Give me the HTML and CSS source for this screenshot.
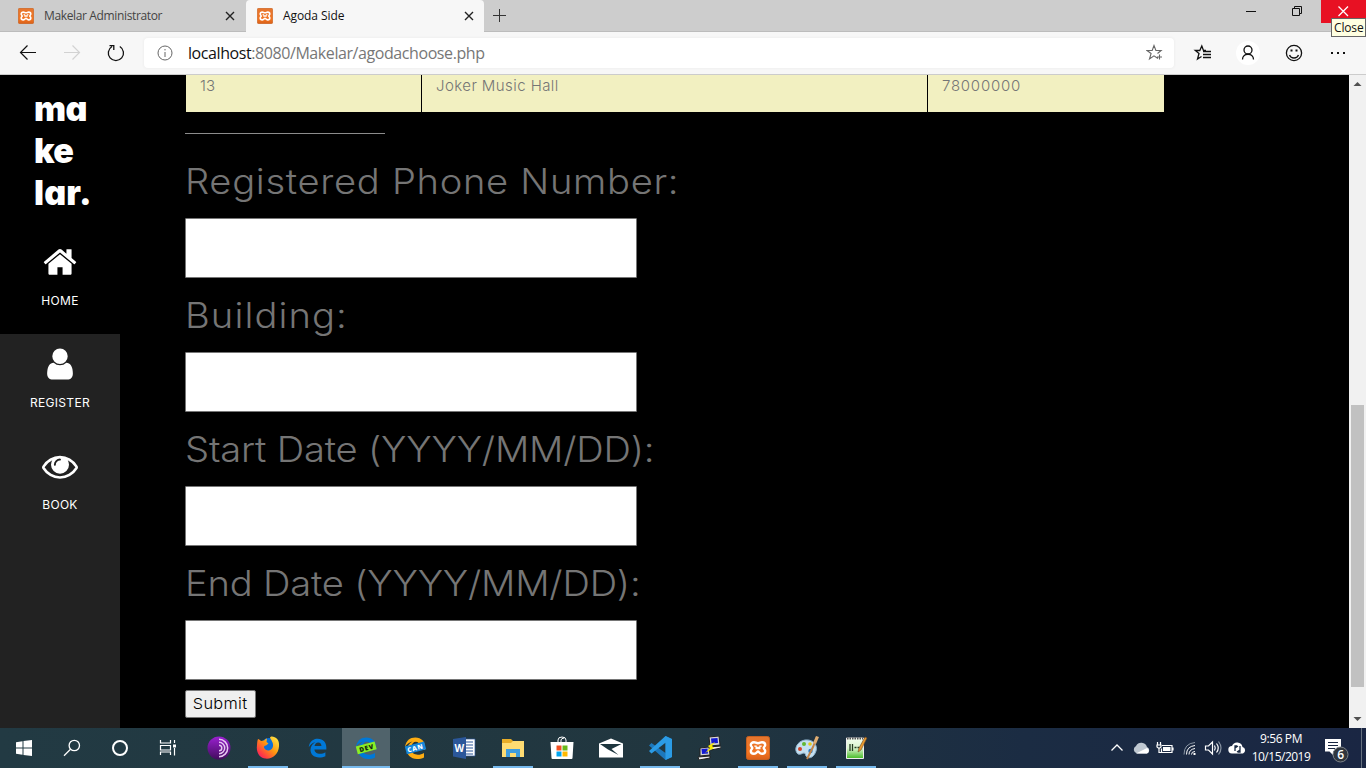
FILE: index.html
```html
<!DOCTYPE html>
<html lang="en">
<head>
<meta charset="utf-8">
<title>Agoda Side</title>
<link rel="stylesheet" href="styles.css">
</head>
<body>
<svg class="defs" width="0" height="0">
  <defs>
    <linearGradient id="orange" x1="0" y1="0" x2="0" y2="1"><stop offset="0" stop-color="#e5762f"/><stop offset=".7" stop-color="#f37521"/><stop offset="1" stop-color="#d9601a"/></linearGradient>
    <linearGradient id="tor" x1="0" y1="0" x2="0" y2="1"><stop offset="0" stop-color="#9a20d0"/><stop offset="1" stop-color="#420c5d"/></linearGradient>
    <linearGradient id="fox" x1="1" y1="0" x2="0" y2="1"><stop offset="0" stop-color="#fff44f"/><stop offset=".45" stop-color="#ff980e"/><stop offset=".8" stop-color="#ff3647"/><stop offset="1" stop-color="#e31587"/></linearGradient>
    <linearGradient id="grass" x1="0" y1="0" x2="0" y2="1"><stop offset="0" stop-color="#f4fdf0"/><stop offset=".5" stop-color="#d8f4cc"/><stop offset="1" stop-color="#45bb25"/></linearGradient>
    <symbol id="xampp" viewBox="0 0 24 24">
      <rect x=".5" y=".5" width="23" height="23" rx="2" fill="url(#orange)" stroke="#c8601f"/>
      <path d="M8 6.200c1.500 0 2.200 1 4 1s2.500-1 4-1c2 0 3.200 1.200 3.200 2.900 0 1.400-1.500 1.900-1.500 2.900s1.500 1.500 1.500 2.900c0 1.700-1.200 2.900-3.200 2.900-2.500 0-3-2.400-4-2.400s-1.500 2.400-4 2.400c-2 0-3.200-1.200-3.200-2.900 0-1.400 1.500-1.900 1.500-2.900s-1.500-1.500-1.500-2.900c0-1.700 1.200-2.900 3.200-2.900zM9.500 9.500v1.200M14.500 9.500v1.200M9.500 12h5" fill="none" stroke="#fff" stroke-width="2.400"/>
    </symbol>
    <symbol id="edge" viewBox="0 0 24 24">
      <path d="M2 11C3 4.500 7 1.500 12.300 1.500c6.200 0 9.800 4.300 9.800 10v2.300H8.500c.2 3.300 3 4.900 6.300 4.900 2.300 0 4.500-.7 6.200-1.800v4.500c-1.900 1-4.300 1.500-7 1.500C7.600 22.900 4 19.200 4 14.100c0-4 2.300-7 5.600-8.700C6.200 5.900 3.700 8.100 2 11zm6.600-1.200h7.900c0-2.200-1.200-4.100-3.700-4.100-2.200 0-3.800 1.700-4.200 4.100z" fill="currentColor"/>
    </symbol>
  </defs>
</svg>

<header class="browser">
  <div class="tabs">
    <div class="tab">
      <svg class="favicon"><use href="#xampp"/></svg>
      <span class="tab-title admin">Makelar Administrator</span>
      <svg class="tab-close" viewBox="0 0 10 10"><path d="M1 1l8 8M9 1l-8 8"/></svg>
    </div>
    <div class="tab active">
      <svg class="favicon"><use href="#xampp"/></svg>
      <span class="tab-title agoda">Agoda Side</span>
      <svg class="tab-close" viewBox="0 0 10 10"><path d="M1 1l8 8M9 1l-8 8"/></svg>
    </div>
    <svg class="new-tab" viewBox="0 0 13 13"><path d="M6.500 0v13M0 6.500h13"/></svg>
    <div class="window-buttons">
      <svg viewBox="0 0 46 23"><path d="M17 11.500h10"/></svg>
      <svg viewBox="0 0 46 23"><path d="M17.500 8.500h7v7h-7zM19.500 8V6.500h7v7H25"/></svg>
      <svg class="close" viewBox="0 0 45 23"><path d="M17.500 6.500l9.500 9.500M27 6.500l-9.500 9.500"/></svg>
    </div>
  </div>
  <div class="toolbar">
    <svg class="nav" viewBox="0 0 120 42" fill="none">
      <path d="M36 20.500H21M27.500 13.500l-7 7 7 7" stroke="#111" stroke-width="1.200"/>
      <path d="M64 20.500h15M72.500 13.500l7 7-7 7" stroke="#d2d2d2" stroke-width="1.200"/>
      <path d="M119.800 14.500a7.600 7.600 0 1 1-7.800 0M109.500 13.700h4.300v4.300" stroke="#111" stroke-width="1.300"/>
    </svg>
    <div class="address">
      <svg class="info" viewBox="0 0 16 16"><circle cx="8" cy="8" r="7"/><path d="M8 7v5M8 4v1.400"/></svg>
      <span class="url"><b>localhost</b>:8080/Makelar/agodachoose.php</span>
      <svg class="star" viewBox="0 0 18 18"><path d="M12 14.500l-4-2.700-4.500 3.200 1.600-5.500L1 6.500h5.200L8 1.500l1.900 5h5.200l-3.600 3M13.500 10.500v5M11 13h5"/></svg>
    </div>
    <svg class="tool-icons" viewBox="0 0 180 42" fill="none" stroke="#111" stroke-width="1.300">
      <path d="M30 18.500h-2.500L25.800 14l-2 4.500h-4.500l3.700 3-1.500 5.500 4-2.500M27 19.500h8M27 22.500h8M27 25.500h8"/>
      <circle cx="72" cy="21" r="12" fill="#fff" stroke="none"/>
      <circle cx="72" cy="18" r="4"/><path d="M66.500 27.500c0-7 11-7 11 0"/>
      <circle cx="118" cy="21" r="7.600"/><path d="M113.500 23c1.500 4 7.500 4 9 0"/>
      <path d="M114.500 18.500h2M119.500 18.500h2M155 21h2M161 21h2M167 21h2" stroke-width="2"/>
    </svg>
  </div>
  <span class="tooltip">Close</span>
</header>

<div class="page">
  <nav class="sidebar">
    <div class="brand">ma<br>ke<br><span class="last">lar.</span></div>
    <a class="item home"><svg viewBox="0 0 1792 1792"><path d="M1472 992v480q0 26-19 45t-45 19h-384v-384h-256v384h-384q-26 0-45-19t-19-45v-480q0-1 .5-3t.5-3l575-474 575 474q1 2 1 6zm223-69l-62 74q-8 9-21 11h-3q-13 0-21-7l-692-577-692 577q-12 8-24 7-13-2-21-11l-62-74q-8-10-7-23.500t11-21.500l719-599q32-26 76-26t76 26l244 204v-195q0-14 9-23t23-9h192q14 0 23 9t9 23v408l219 182q10 8 11 21.500t-7 23.500z"/></svg><span>HOME</span></a>
    <a class="item"><svg viewBox="0 0 1792 1792"><path d="M1536 1399q0 109-62.500 187t-150.500 78h-854q-88 0-150.500-78t-62.500-187q0-85 8.500-160.500t31.500-152 58.500-131 94-89 134.500-34.500q131 128 313 128t313-128q76 0 134.500 34.500t94 89 58.500 131 31.500 152 8.500 160.500zm-256-887q0 159-112.500 271.500t-271.500 112.500-271.500-112.500-112.500-271.500 112.500-271.500 271.500-112.500 271.500 112.500 112.500 271.500z"/></svg><span>REGISTER</span></a>
    <a class="item"><svg viewBox="0 0 1792 1792"><path d="M1664 960q-152-236-381-353 61 104 61 225 0 185-131.500 316.500t-316.500 131.500-316.500-131.500-131.500-316.500q0-121 61-225-229 117-381 353 133 205 333.500 326.500t434.500 121.500 434.500-121.500 333.500-326.500zm-720-384q0-20-14-34t-34-14q-125 0-214.500 89.500t-89.500 214.500q0 20 14 34t34 14 34-14 14-34q0-86 61-147t147-61q20 0 34-14t14-34zm848 384q0 34-20 69-140 230-376.500 368.500t-499.500 138.500-499.500-139-376.500-368q-20-35-20-69t20-69q140-229 376.500-368t499.500-139 499.500 139 376.500 368q20 35 20 69z"/></svg><span>BOOK</span></a>
  </nav>
  <main class="content">
    <div class="row"><div>13</div><div class="name">Joker Music Hall</div><div class="price">78000000</div></div>
    <hr class="rule">
    <form class="form">
      <label class="wide">Registered Phone Number:</label><input type="text">
      <label class="wide building">Building:</label><input type="text">
      <label class="dated">Start Date (YYYY/MM/DD):</label><input type="text">
      <label class="dated">End Date (YYYY/MM/DD):</label><input type="text">
      <button type="button" class="submit"><span>Submit</span></button>
    </form>
  </main>
  <div class="scrollbar">
    <svg viewBox="0 0 17 17"><path d="M4.500 11h8l-4-4z"/></svg>
    <div class="thumb"></div>
    <svg viewBox="0 0 17 17"><path d="M4.500 6h8l-4 4z"/></svg>
  </div>
</div>

<footer class="taskbar">
  <div class="system">
    <svg viewBox="0 0 24 24"><path fill="#fff" d="M4 6.300l6.500-1v6.300H4zM11.500 5.100L20 4v7.600h-8.500zM4 12.500h6.500v6.300l-6.500-1zM11.500 12.500H20V20l-8.500-1.100z"/></svg>
    <svg viewBox="0 0 24 24" fill="none" stroke="#fff" stroke-width="1.300"><circle cx="14.300" cy="9.500" r="5.200"/><path d="M10.500 13.300L4 19.800"/></svg>
    <svg viewBox="0 0 24 24" fill="none" stroke="#fff" stroke-width="2"><circle cx="12" cy="12" r="7"/></svg>
    <svg viewBox="0 0 24 24" fill="none" stroke="#fff" stroke-width="1.200"><path d="M4.500 4v3h10V4M4.500 19v-3h10v3M4.500 9.500h10v4.500h-10zM18.500 4v3M18.500 12v7.500"/><path d="M17 8.500h3v3h-3z" fill="#fff" stroke="none"/></svg>
  </div>
  <div class="apps">
    <div><svg viewBox="0 0 24 24"><circle cx="12" cy="12" r="11.500" fill="url(#tor)"/><g fill="none" stroke="#e7c8f2" stroke-width="1.500"><path d="M12 3.300a8.700 8.700 0 0 1 0 17.400M12 6.300a5.700 5.700 0 0 1 0 11.400M12 9.200a2.800 2.800 0 0 1 0 5.600"/></g></svg></div>
    <div class="open"><svg viewBox="0 0 24 24"><circle cx="13" cy="10.500" r="8.500" fill="#0a6fd8"/><path fill="url(#fox)" d="M2 3c1 0 2 1 3 2l3-.5c2-2 3-2 3-2l-.5 3.500 2 1.500-2.500 2c-2 0-2 1-2 2 1 3 5 4 7 2 2-1 3-5 1-8-.5-2-2-3-2-4 1-1.500 2-1 2-1 6 1 7.500 5 7 10-.500 8-7 13-14 12C3 21.500 0 16 1 9c.2-3 .5-5 1-6z"/></svg></div>
    <div class="blue"><svg class="small" viewBox="0 0 24 24"><use href="#edge"/></svg></div>
    <div class="open current blue"><svg viewBox="0 0 24 24"><use href="#edge"/><g transform="rotate(-15 12 12)"><rect x="2.500" y="8" width="19.500" height="8" fill="#8aee25"/><text x="5" y="14.500" class="ribbon" fill="#122312">DEV</text></g></svg></div>
    <div class="gold"><svg viewBox="0 0 24 24"><use href="#edge"/><g transform="rotate(-15 12 12)"><rect x="2.500" y="8" width="20" height="8" fill="#1687dc"/><text x="4" y="14.500" class="ribbon" fill="#fff">CAN</text></g></svg></div>
    <div><svg viewBox="0 0 24 24"><path d="M12 3h11v17H12z" fill="#fff" stroke="#2b579a" stroke-width=".7"/><path d="M14 6h7M14 9h7M14 12h7M14 15h7M14 18h7" stroke="#2b579a" stroke-width="1.200"/><path d="M1 3l13-2v22L1 20.500z" fill="#2b579a"/><text x="2.500" y="16" class="word" fill="#fff">W</text></svg></div>
    <div class="open"><svg viewBox="0 0 24 24"><path d="M1 3h9l2 2h10v16H1z" fill="#e8ad28"/><path d="M1 7h9l2-2h11v16H1z" fill="#ffdc72"/><path d="M5 13h14v8h-4v-4H9v4H5z" fill="#409dde"/></svg></div>
    <div><svg viewBox="0 0 24 24"><path d="M8 6V4q0-3 4-3t4 3v2M11 6V4q0-1.500 3-2" fill="none" stroke="#fff"/><path d="M.5 6h23l-1 16q0 1-1 1h-19q-1 0-1-1z" fill="#fff"/><path d="M6.500 9.500h5v5h-5z" fill="#f25022"/><path d="M12.500 9.500h5v5h-5z" fill="#6ab91a"/><path d="M6.500 15.500h5v5h-5z" fill="#00a4ef"/><path d="M12.500 15.500h5v5h-5z" fill="#ffb900"/></svg></div>
    <div><svg viewBox="0 0 24 24"><path d="M0 7.500L12 2.500l12 5V21.500H0z" fill="#fff"/><path d="M1 8h21.500L12.500 13l7 6L9 13.500z" fill="#1d353e"/></svg></div>
    <div class="open"><svg viewBox="0 0 24 24"><path d="M17.500 0L24 3v18l-6.500 3L1 9.500 3.500 7l14 10z" fill="#1d78bc"/><path d="M17.500 0L24 3v18l-6.500 3V6.800L3.500 17.500 1 15z" fill="#2b9be5"/></svg></div>
    <div><svg viewBox="0 0 24 24"><g stroke="#222"><path d="M12 1l10-1 1 9-10 1zM3 12l9-1 1 8-10 1z" fill="#d4d4d4"/><path d="M12 11l12-1v2l-10 2zM1 21l12-1v2L2 24z" fill="#eee"/></g><path d="M14 2.500l6.500-.5.500 5-6.500.5zM4.500 13l6-.5.500 5-6 .5z" fill="#1118d2"/><path d="M18 6l-7 4 2 2-5 5 9-5-2-2z" fill="#f8e900"/></svg></div>
    <div class="open"><svg><use href="#xampp"/></svg></div>
    <div class="open"><svg viewBox="0 0 24 24"><path d="M10 4c8-1 13 5 11 11s-6 8-9 6c-2-1-1-4-3-4s-3 2-6 1C-2 14 2 5 10 4z" fill="#c4dff0" stroke="#8fb3cd"/><circle cx="9" cy="8" r="2" fill="#63b832"/><circle cx="15" cy="8" r="1.800" fill="#e6c71c"/><circle cx="5" cy="13" r="2" fill="#d34327"/><circle cx="15.500" cy="15" r="2.200" fill="#2977bd"/><path d="M22 1l-4 10-6 12" fill="none" stroke="#c1844a" stroke-width="2"/><path d="M21 0l3 1-3 7-3-1z" fill="#e0ad72"/></svg></div>
    <div class="open"><svg viewBox="0 0 24 24"><path d="M2.500 2h17v20.500h-17z" fill="url(#grass)" stroke="#eee"/><path d="M3 2.500h16" stroke="#555" stroke-width="2" stroke-dasharray="1.500 1"/><path d="M6 8v7M8.500 8v7M10.500 11.500h2M13.500 11.500h2" stroke="#243a20" stroke-width="1.300"/><path d="M21 1l2 1-6 12-3 2 1-4z" fill="#e99b2e" stroke="#6c4528" stroke-width=".6"/></svg></div>
  </div>
  <div class="tray">
    <svg viewBox="0 0 24 24" fill="none" stroke="#fff" stroke-width="1.300"><path d="M6.500 14.500L12 9l5.500 5.500"/></svg>
    <svg viewBox="0 0 24 24"><path d="M8 17.500a4 4 0 0 1-1-7.500 6 6 0 0 1 11 1 3.500 3.500 0 0 1 0 6.500z" fill="#bfc8d1"/><path d="M7 17.500L18 12a3 3 0 0 1 0 5.500z" fill="#fff"/></svg>
    <svg viewBox="0 0 24 24" fill="none" stroke="#fff" stroke-width="1.200"><path d="M9 9.500h10v7H8.500v-4M20 11.500v3M4.500 6v3M7.500 6v3M4 9h4v2l-2 1.500L4 11zM6 12.500v4h2.500"/><path d="M10 11h7.500v4H10z" fill="#fff" stroke="none"/></svg>
    <svg viewBox="0 0 24 24" fill="none" stroke="#fff"><path d="M7 18.500q0-11 11-12" stroke="#8995a3"/><path d="M9.500 18.500q0-8 8.500-9M12 18.500q0-5 6-6M14.500 18.500q0-3 3.500-3"/><path d="M16.500 17h2v2h-2z" fill="#fff" stroke="none"/></svg>
    <svg viewBox="0 0 24 24" fill="none" stroke="#fff" stroke-width="1.200"><path d="M4.500 10h3l4-4v12l-4-4h-3zM13.500 9.500q1.500 2.500 0 5M15.500 7.500q3.500 4.500 0 9"/><path d="M17.500 5.500q5 6.500 0 13" stroke="#8995a3"/></svg>
    <svg viewBox="0 0 24 24"><path d="M7 17.500a3.700 3.700 0 0 1 0-7.400 5.500 5.500 0 0 1 10.500.8 3.500 3.500 0 0 1 .5 6.600z" fill="#fff"/><path d="M10 15v-3l3-2M10 12v-2h2M15 10v4l-3 2M15 14v2h-2" fill="none" stroke="#1a2a43" stroke-width="1.300"/></svg>
    <div class="clock"><span class="time">9:56 PM</span><span class="date">10/15/2019</span></div>
    <svg class="notice" viewBox="0 0 30 30"><path d="M5 5h16v12.500h-8V21l-3.500-3.500H5z" fill="#fff"/><path d="M8 8.500h10M8 11.500h10M8 14.500h7" stroke="#1a2743" stroke-width="1.200"/><circle cx="20.500" cy="20.500" r="7.500" fill="#30363e" stroke="#7d838a"/><text x="17.200" y="25" class="count" fill="#fff">6</text></svg>
    <i class="peek"></i>
  </div>
</footer>
</body>
</html>
```
FILE: styles.css
```css
* { box-sizing: border-box; }
body { margin: 0; width: 1366px; height: 768px; overflow: hidden; background: #000; font-family: "Open Sans", "Noto Sans", sans-serif; display: flex; flex-direction: column; }
svg { display: block; flex: none; }
.defs { position: absolute; }

.browser { position: relative; height: 75px; background: #f7f7f7; border-bottom: 1px solid #ccc; }
.tabs { height: 32px; display: flex; background: #cdcdcd; border-bottom: 1px solid #bcbcbc; }
.tab { display: flex; align-items: center; height: 32px; width: 246px; padding: 0 11px 0 18px; color: #444; }
.tab.active { width: 238px; padding: 0 10px 0 11px; background: #f7f7f7; color: #111; border-radius: 4px 4px 0 0; }
.favicon { width: 16px; height: 16px; }
.tab-title { flex: 1; margin-left: 10px; font-size: 12px; line-height: 16px; white-space: nowrap; }
.admin { letter-spacing: -.36px; }
.agoda { letter-spacing: -.08px; }
.tab-close { width: 10px; height: 10px; fill: none; stroke: #222; stroke-width: 1.4; }
.new-tab { width: 13px; height: 13px; margin: 9px 0 0 9px; fill: none; stroke: #333; }
.window-buttons { display: flex; margin-left: auto; height: 23px; fill: none; stroke: #111; }
.window-buttons svg { width: 46px; height: 23px; }
.window-buttons .close { width: 45px; background: #e81123; stroke: #fff; stroke-width: 1.3; }
.tooltip { position: absolute; left: 1331px; top: 18px; width: 35px; height: 19px; padding-left: 2px; border: 1px solid #666; background: #ffffe1; font-size: 12px; line-height: 17px; letter-spacing: -.15px; color: #111; }
.toolbar { height: 42px; display: flex; align-items: center; }
.nav { width: 120px; height: 42px; margin-right: 24px; overflow: visible; }
.address { width: 1030px; height: 30px; border-radius: 4px; background: #fff; display: flex; align-items: center; padding: 0 10px 0 13px; box-shadow: 0 0 3px #e7e7e7; }
.info { width: 16px; height: 16px; fill: none; stroke: #666; }
.url { flex: 1; margin-left: 15px; font-size: 16px; letter-spacing: -.42px; color: #777; }
.url b { font-weight: 400; color: #111; }
.star { width: 18px; height: 18px; fill: none; stroke: #666; stroke-width: 1.1; }
.tool-icons { width: 180px; height: 42px; margin-left: 2px; }

.page { flex: 1; display: flex; min-height: 0; }
.sidebar { width: 120px; background: #222; color: #fff; }
.brand { height: 157px; padding: 13px 0 0 34px; background: #000; font: 900 34px/42px Inter, sans-serif; font-feature-settings: "cv11"; letter-spacing: -.6px; }
.brand .last { letter-spacing: .1px; }
.item { display: flex; flex-direction: column; align-items: center; height: 102px; padding-top: 12px; font: 400 12px/18px Inter, sans-serif; letter-spacing: .3px; }
.item svg { width: 36px; height: 36px; fill: #fff; }
.item span { margin-top: 12px; }
.home { background: #000; }
.content { width: 1229px; padding-left: 65px; font-family: Inter, sans-serif; font-weight: 300; color: #757575; }
.row { display: grid; grid-template-columns: 235px 505px 236px; gap: 1px; height: 37px; margin-left: 1px; font-size: 15px; line-height: 22px; }
.row div { padding-left: 14px; background: #f2f0c1; }
.row .name { letter-spacing: .43px; }
.row .price { letter-spacing: .75px; }
.rule { width: 200px; height: 1px; border: 0; margin: 21px 0 0; background: #8c8c8c; }
.form { display: flex; flex-direction: column; align-items: flex-start; padding-top: 10px; }
.form label { height: 74px; line-height: 74px; font-size: 35px; white-space: nowrap; transform: scaleX(1.09); transform-origin: left; }
.form .wide { letter-spacing: .62px; }
.form .building { letter-spacing: 1px; }
.form .dated { letter-spacing: -.2px; }
.form input { width: 452px; height: 60px; border: 1px solid #767676; border-radius: 1px; padding: 0; background: #fff; }
.form .submit { width: 71px; height: 28px; margin-top: 10px; padding: 0 0 2px; border: 1px solid #767676; border-radius: 2px; background: #efefef; color: #000; font: 300 15px Inter, sans-serif; letter-spacing: .3px; }
.submit span { display: inline-block; transform: scaleX(1.09); }
.scrollbar { width: 17px; background: #f1f1f1; display: flex; flex-direction: column; align-items: center; }
.scrollbar svg { width: 17px; height: 17px; fill: #505050; }
.thumb { width: 13px; height: 282px; margin: auto 2px 24px; background: #c1c1c1; }

.taskbar { height: 40px; display: flex; background: linear-gradient(90deg, #223a43, #21363f 50%, #1b2c43 75%, #1a2643); }
.system { display: flex; width: 195px; }
.system svg { width: 24px; height: 24px; margin: 8px 12px; }
.apps { display: grid; grid-template-columns: repeat(14, 48.98px); }
.apps div { display: flex; justify-content: center; height: 40px; padding-top: 8px; }
.apps svg { width: 24px; height: 24px; }
.apps .small { width: 21px; height: 22px; margin-top: 1px; }
.apps .open { background: linear-gradient(#76b9ed, #76b9ed) center bottom / 40px 2px no-repeat; }
.apps .current { background: linear-gradient(#76b9ed, #76b9ed) center bottom / 48px 2px no-repeat, linear-gradient(#50636b, #50636b) center / 48px 40px no-repeat; }
.blue { color: #0078d7; }
.gold { color: #ffad12; }
.ribbon { font: 800 6.5px "Open Sans", sans-serif; letter-spacing: .8px; }
.word { font: 700 10px "Open Sans", sans-serif; }
.tray { display: flex; align-items: center; margin-left: auto; }
.tray svg { width: 24px; height: 24px; }
.clock { display: flex; flex-direction: column; align-items: center; width: 64px; color: #fff; font-size: 12px; line-height: 18px; white-space: nowrap; }
.time { letter-spacing: -.4px; }
.date { letter-spacing: -.5px; }
.tray .notice { width: 30px; height: 30px; margin: 1px 0 0 7px; }
.count { font: 600 12px "Open Sans", sans-serif; }
.peek { width: 1px; height: 40px; margin: 0 4px 0 11px; background: #66717f; }
```
